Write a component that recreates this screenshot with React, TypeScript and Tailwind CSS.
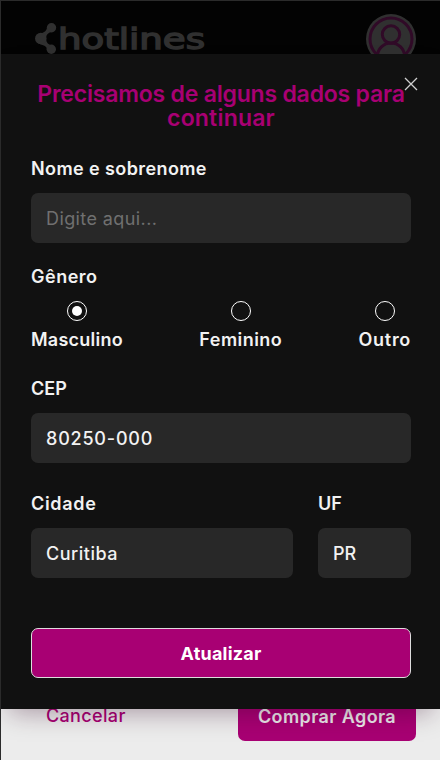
import { useState } from "react";
import type { InputHTMLAttributes, ReactNode } from "react";
import { clsx } from "clsx";

const GENDERS = [
  { label: "Masculino", className: "tracking-[0.25px]" },
  { label: "Feminino", className: "tracking-[0.45px]" },
  { label: "Outro", className: "tracking-[0.7px]" },
];

function Logo() {
  return (
    <svg width="172" height="34" viewBox="0 0 172 34" fill="#303030" aria-label="hotlines">
      <path d="M13 5C13 10 8 11 5 12L4 21C9 24 13 23 13 28L19 23.500C14 23 12 20 12 16.500S14 10.500 19 9.500Z" />
      <circle cx="17.5" cy="5.7" r="4.7" />
      <circle cx="6.8" cy="16.5" r="5.8" />
      <circle cx="17.3" cy="27.3" r="4.7" />
      <text
        x="24"
        y="26.500"
        textLength="147"
        lengthAdjust="spacingAndGlyphs"
        stroke="#303030"
        strokeWidth="1.4"
        className="font-['DejaVu_Sans',sans-serif] text-[28px]"
      >
        hotlines
      </text>
    </svg>
  );
}

function Avatar() {
  return (
    <svg width="50" height="50" viewBox="0 0 50 50" fill="none" stroke="#300a27">
      <circle cx="25" cy="25" r="25" fill="#303030" stroke="none" />
      <circle cx="25" cy="25" r="21" strokeWidth="3" />
      <circle cx="25" cy="20.5" r="8.7" strokeWidth="3" />
      <path d="M11.500 42c0-7 6-13 13.500-13s13.500 6 13.500 13" strokeWidth="3" />
    </svg>
  );
}

interface FieldProps extends InputHTMLAttributes<HTMLInputElement> {
  label: ReactNode;
  labelClass?: string;
  wrapperClass?: string;
}

function Field({ label, labelClass, wrapperClass, className, ...props }: FieldProps) {
  return (
    <label className={clsx("flex flex-col", wrapperClass)}>
      <span className={clsx("h-[25px] text-[18px] leading-[25px] font-semibold", labelClass)}>{label}</span>
      <input
        className={clsx(
          "mt-3 h-[50px] w-full rounded-[7px] bg-[#282828] px-[15px] text-[18px] text-[#f2f2f2] outline-none placeholder:text-[#707070]",
          className
        )}
        {...props}
      />
    </label>
  );
}

export default function App() {
  const [gender, setGender] = useState("Masculino");

  return (
    <div className="relative flex h-[760px] w-[440px] flex-col justify-between overflow-hidden border-t border-l border-[#2b2b2b] bg-[#ececec] font-[Inter,sans-serif]">
      <header className="flex h-[78px] shrink-0 items-start justify-between bg-[#030303] pt-[13px] pr-6 pl-[33px]">
        <div className="mt-2">
          <Logo />
        </div>
        <Avatar />
      </header>

      <footer className="flex h-[78px] items-start justify-between pr-6 pl-[45px]">
        <button className="mt-[21px] text-[18px] leading-[25px] font-medium tracking-[0.35px] text-[#a80073]">Cancelar</button>
        <button className="h-[59px] w-[178px] rounded-[7px] bg-[#a80073] pt-[9px] text-[18px] font-semibold tracking-[0.4px] whitespace-nowrap text-[#ececec]">
          Comprar Agora
        </button>
      </footer>

      <div className="absolute top-[52.5px] left-0 h-[655px] w-[439px] bg-[#111] pt-[28.5px] pr-[29px] pl-[30px] text-[#f2f2f2] shadow-[0_12px_24px_-8px_rgba(50,0,35,0.35)]">
        <button aria-label="Fechar" className="absolute top-[23px] right-[22px]">
          <svg width="14" height="14" viewBox="0 0 14 14" stroke="#d0d0d0" strokeWidth="1.3">
            <path d="M1 1l12 12M13 1L1 13" />
          </svg>
        </button>

        <h2 className="-mx-5 flex h-12 flex-col items-center text-[23px] leading-6 font-semibold text-[#a80073]">
          <span className="tracking-[-0.2px]">Precisamos de alguns dados para</span>
          <span className="tracking-[0.2px]">continuar</span>
        </h2>

        <form onSubmit={(e) => e.preventDefault()}>
          <Field
            label="Nome e sobrenome"
            labelClass="tracking-[0.4px]"
            placeholder="Digite aqui..."
            wrapperClass="mt-[26px]"
            className="tracking-[0.4px]"
          />

          <fieldset className="mt-[21px]">
            <legend className="text-[18px] leading-[25px] font-semibold tracking-[0.5px]">Gênero</legend>
            <div className="mt-3 flex justify-between">
              {GENDERS.map((g) => (
                <label key={g.label} className="flex flex-col items-center text-[18px] leading-[25px] font-semibold">
                  <input
                    type="radio"
                    name="gender"
                    className="sr-only"
                    checked={gender === g.label}
                    onChange={() => setGender(g.label)}
                  />
                  <span className="mb-[6px] flex h-5 w-5 items-center justify-center rounded-full border border-white">
                    {gender === g.label && <span className="mb-px h-[10px] w-[10px] rounded-full bg-white" />}
                  </span>
                  <span className={g.className}>{g.label}</span>
                </label>
              ))}
            </div>
          </fieldset>

          <Field
            label="CEP"
            defaultValue="80250-000"
            wrapperClass="mt-6"
            className="font-medium tracking-[0.8px]"
          />

          <div className="mt-7 flex justify-between">
            <Field
              label="Cidade"
              labelClass="tracking-[0.7px]"
              defaultValue="Curitiba"
              wrapperClass="w-[262px]"
              className="font-medium tracking-[0.5px]"
            />
            <Field label="UF" defaultValue="PR" wrapperClass="w-[93px]" className="font-medium" />
          </div>

          <button className="mt-[50px] h-[50px] w-full rounded-[7px] border border-[#ddd] bg-[#a80073] text-[18px] font-bold tracking-[0.2px] text-white">
            Atualizar
          </button>
        </form>
      </div>
    </div>
  );
}
